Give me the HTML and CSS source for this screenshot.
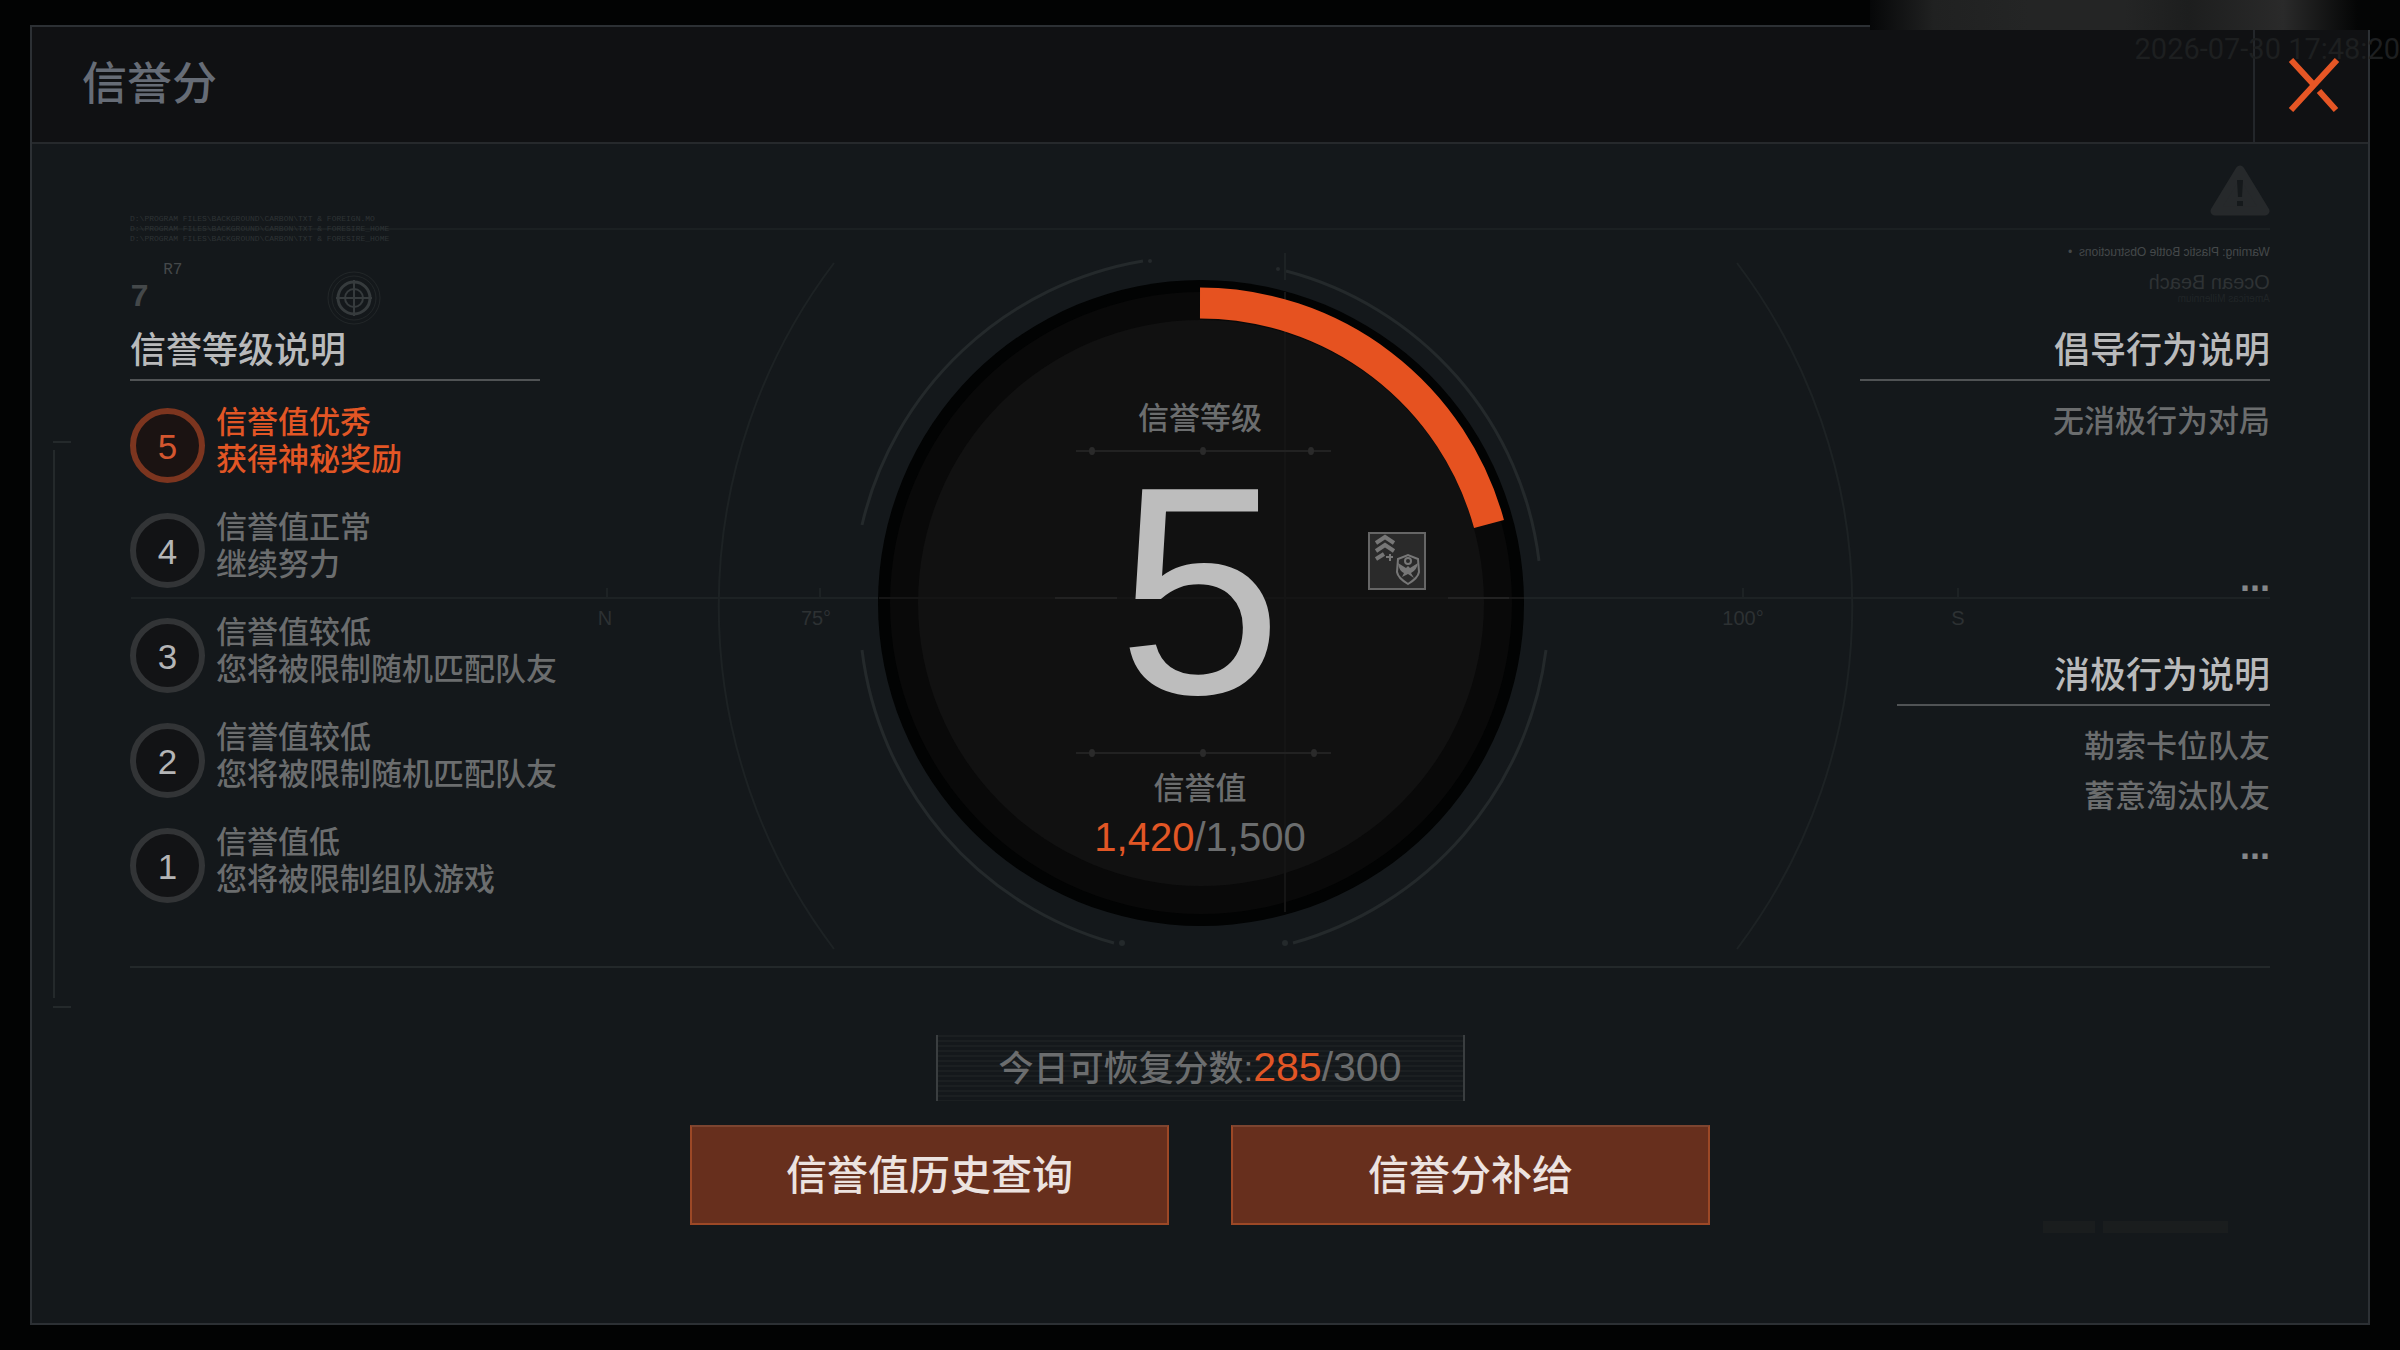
FILE: index.html
```
<!DOCTYPE html>
<html lang="zh-CN">
<head>
    <meta charset="UTF-8">
    <title>信誉分</title>
    <link rel="stylesheet" href="styles.css">
</head>
<body>
    <div class="panel">
        <header class="panel-header">
            <h1>信誉分</h1>
            <button class="close" type="button" aria-label="关闭">
                <svg width="52" height="54" viewBox="0 0 52 54">
                    <path d="M49 2L3 52M3 2L26 27M31 33L48 52"/>
                </svg>
            </button>
        </header>

        <main class="board">
            <!-- compass lines, outer arcs and the score ring -->
            <svg class="hud" viewBox="130 230 2140 736" aria-hidden="true">
                <g class="hud-faint">
                    <path d="M131 598H879M1524 598H2270"/>
                    <path d="M834 263A568 568 0 0 0 834 949M1737 263A568 568 0 0 1 1737 949"/>
                    <path d="M1285 253V280M607 588V598M820 588V598M1743 588V598M1958 588V598"/>
                </g>
                <path class="hud-bracket" d="M54 450V998M53 442H71M53 1007H71"/>
                <path class="hud-arc" d="M862 525A348 348 0 0 1 1143 261M1286 271A342 342 0 0 1 1539 561M862 650A348 348 0 0 0 1114 943M1546 650A350 350 0 0 1 1293 943"/>
                <g class="hud-dot">
                    <circle cx="1150" cy="261" r="2"/>
                    <circle cx="1278" cy="269" r="2"/>
                    <circle cx="1122" cy="943" r="3"/>
                    <circle cx="1285" cy="943" r="3"/>
                </g>
                <g class="hud-text">
                    <text x="605" y="625">N</text>
                    <text x="816" y="625">75°</text>
                    <text x="1743" y="625">100°</text>
                    <text x="1958" y="625">S</text>
                </g>

                <circle cx="1201" cy="603" r="323" fill="#020303"/>
                <circle cx="1201" cy="603" r="311" fill="#090909"/>
                <circle cx="1201" cy="603" r="283" fill="#111111"/>
                <path d="M1285 292V912M879 598H1524" stroke="#151515" stroke-width="2"/>
                <path d="M1055 598H1117M1448 598H1509" stroke="#222222" stroke-width="2"/>
                <path d="M1200 303A300 300 0 0 1 1489 524" fill="none" stroke="#e65220" stroke-width="31"/>

                <path d="M1076 451H1331M1076 753H1331" stroke="#222222" stroke-width="2"/>
                <g fill="#2a2a2a">
                    <ellipse cx="1092" cy="451" rx="3" ry="4"/>
                    <ellipse cx="1203" cy="451" rx="3" ry="4"/>
                    <ellipse cx="1311" cy="451" rx="3" ry="4"/>
                    <ellipse cx="1092" cy="753" rx="3" ry="4"/>
                    <ellipse cx="1203" cy="753" rx="3" ry="4"/>
                    <ellipse cx="1314" cy="753" rx="3" ry="4"/>
                </g>

                <!-- rank badge -->
                <g class="badge" transform="translate(1368 532)">
                    <rect x="1" y="1" width="56" height="56"/>
                    <path class="chevron" d="M8 11L17 5L26 11M8 19L17 13L26 19M8 27L16 22"/>
                    <path d="M18 25H25M22 22V29"/>
                    <path class="shield" d="M30 27L40 23L50 27L51 40Q50 46 40 52Q30 46 29 40Z"/>
                    <circle cx="40" cy="29" r="3"/>
                    <path class="wings" d="M30 31Q31 39 36 41L34 45L40 42L46 46L43 41Q49 38 50 31L42 36L40 34L38 36Z"/>
                </g>
            </svg>

            <section class="levels">
                <pre class="code-lines">D:\PROGRAM FILES\BACKGROUND\CARBON\TXT &amp; FOREIGN.MO
D:\PROGRAM FILES\BACKGROUND\CARBON\TXT &amp; FORESIRE_HOME
D:\PROGRAM FILES\BACKGROUND\CARBON\TXT &amp; FORESIRE_HOME</pre>
                <div class="meta">
                    <span class="meta-num">7</span>
                    <span class="meta-code">R7</span>
                    <svg class="target" width="56" height="56" viewBox="0 0 56 56">
                        <circle cx="28" cy="28" r="26" stroke-width="1" opacity=".4"/>
                        <circle cx="28" cy="28" r="22" stroke-width="1" opacity=".4"/>
                        <circle cx="28" cy="28" r="16" stroke-width="3"/>
                        <circle cx="28" cy="28" r="9" stroke-width="2"/>
                        <path d="M10 28H46M28 10V46" stroke-width="2"/>
                    </svg>
                </div>
                <h2>信誉等级说明</h2>
                <ol class="level-list">
                    <li class="active"><b>5</b><p>信誉值优秀<br>获得神秘奖励</p></li>
                    <li><b>4</b><p>信誉值正常<br>继续努力</p></li>
                    <li><b>3</b><p>信誉值较低<br>您将被限制随机匹配队友</p></li>
                    <li><b>2</b><p>信誉值较低<br>您将被限制随机匹配队友</p></li>
                    <li><b>1</b><p>信誉值低<br>您将被限制组队游戏</p></li>
                </ol>
            </section>

            <section class="score">
                <p class="score-label">信誉等级</p>
                <p class="score-level">5</p>
                <p class="score-label">信誉值</p>
                <p class="score-value"><em>1,420</em>/1,500</p>
            </section>

            <section class="rules">
                <svg class="warning" width="60" height="52" viewBox="0 0 60 52">
                    <path d="M30 5L55 46H5Z" fill="#26292b" stroke="#26292b" stroke-width="9" stroke-linejoin="round"/>
                    <path d="M27 15H33L32 32H28ZM27 36H33V41H27Z" fill="#15191b"/>
                </svg>
                <div class="mirror">
                    <p class="mirror-small">Warning: Plastic Bottle Obstructions &nbsp;•</p>
                    <p class="mirror-big">Ocean Beach</p>
                    <p class="mirror-tiny">Americas Millennium</p>
                </div>
                <h2>倡导行为说明</h2>
                <ul class="good">
                    <li>无消极行为对局</li>
                    <li class="more">...</li>
                </ul>
                <h2 class="short">消极行为说明</h2>
                <ul>
                    <li>勒索卡位队友</li>
                    <li>蓄意淘汰队友</li>
                    <li class="more">...</li>
                </ul>
            </section>
        </main>

        <footer class="panel-footer">
            <p class="recover"><span>今日可恢复分数:</span><em>285</em>/300</p>
            <div class="actions">
                <button type="button">信誉值历史查询</button>
                <button type="button">信誉分补给</button>
            </div>
        </footer>
        <div class="ghost-bars"><i></i><i></i></div>
    </div>
    <div class="top-strip"></div>
    <time class="clock">2026-07-30 17:48:20</time>
</body>
</html>
```

FILE: styles.css
```
* {
    box-sizing: border-box;
}
body {
    margin: 0;
    padding: 25px 30px;
    min-height: 100vh;
    display: flex;
    position: relative;
    overflow: hidden;
    background: #020303;
    color: #6b6d6e;
    font-family: "Liberation Sans", "Noto Sans CJK SC", sans-serif;
    font-weight: 500;
}
h1, h2, p, ul, ol, pre {
    margin: 0;
    padding: 0;
    font-weight: 500;
}
h1, h2, p, li {
    white-space: nowrap;
}
ul, ol {
    list-style: none;
}
em {
    color: #e25625;
    font-style: normal;
}
button {
    font-family: inherit;
    cursor: pointer;
}

.panel {
    flex: 1;
    position: relative;
    display: flex;
    flex-direction: column;
    border: 2px solid #2c3034;
    background: #14181b;
}
.panel-header {
    display: flex;
    justify-content: space-between;
    height: 117px;
    border-bottom: 2px solid #26292c;
    background: #101113;
}
h1 {
    padding-left: 50px;
    color: #666c76;
    font-size: 45px;
    line-height: 116px;
}
.close {
    width: 115px;
    padding: 4px 0 0 4px;
    border: 0;
    border-left: 2px solid #23262a;
    background: none;
}
.close path {
    fill: none;
    stroke: #e65625;
    stroke-width: 6;
}

/* middle board */
.board {
    position: relative;
    display: grid;
    grid-template-columns: 450px 1fr 450px;
    height: 740px;
    margin: 84px 98px 0;
    border-top: 2px solid #1b2022;
    border-bottom: 2px solid #23282a;
}
.hud {
    position: absolute;
    inset: 0;
    width: 100%;
    height: 100%;
    overflow: visible;
}
.hud-faint {
    fill: none;
    stroke: #1d2224;
    stroke-width: 2;
}
.hud-bracket, .hud-arc {
    fill: none;
    stroke: #24292b;
    stroke-width: 2;
}
.hud-arc {
    stroke-width: 3;
}
.hud-dot {
    fill: #24292b;
}
.hud-text {
    fill: #2d3133;
    font-size: 20px;
    text-anchor: middle;
}
.badge rect {
    fill: #2a2a2a;
    stroke: #666666;
    stroke-width: 2;
}
.badge path, .badge circle {
    fill: none;
    stroke: #777777;
    stroke-width: 2;
}
.badge .chevron {
    stroke-width: 4;
}
.badge .wings {
    fill: #777777;
    stroke: none;
}
.levels, .score, .rules {
    position: relative;
}
h2 {
    width: 410px;
    padding-bottom: 5px;
    border-bottom: 2px solid #505355;
    color: #b9babb;
    font-size: 36px;
    line-height: 46px;
}

/* left column */
.code-lines {
    position: absolute;
    top: -16px;
    color: #2e3335;
    font: 8px/10px "Liberation Mono", monospace;
}
.meta {
    position: relative;
    display: flex;
    height: 98px;
    padding-top: 30px;
    color: #44484a;
    font-family: "Liberation Mono", monospace;
}
.meta-num {
    padding-top: 20px;
    font-size: 32px;
    font-weight: 700;
    line-height: 36px;
}
.meta-code {
    margin-left: 14px;
    font-size: 16px;
    line-height: 20px;
}
.target {
    margin: 10px 0 0 144px;
    fill: none;
    stroke: #363b3d;
}
.level-list {
    display: grid;
    gap: 31px;
    margin-top: 23px;
}
.level-list li {
    display: flex;
    gap: 11px;
    height: 74px;
    font-size: 31px;
    line-height: 37px;
}
.level-list b {
    width: 75px;
    height: 75px;
    margin-top: 4px;
    border: 6px solid #323436;
    border-radius: 50%;
    background: #121315;
    color: #b4b5b6;
    font-size: 35px;
    font-weight: 400;
    line-height: 66px;
    text-align: center;
}
.level-list .active {
    color: #e25625;
}
.level-list .active b {
    border-color: #7c351f;
    background: #1b1312;
    color: #d3562f;
}

/* dial text */
.score {
    padding-top: 169px;
    text-align: center;
}
.score-label {
    font-size: 31px;
    line-height: 40px;
}
.score-level {
    margin: 32px 0 58px;
    color: #bdbdbd;
    font-size: 296px;
    line-height: 240px;
}
.score-value {
    margin-top: 4px;
    font-size: 40px;
    line-height: 48px;
}

/* right column */
.rules {
    display: flex;
    flex-direction: column;
    align-items: flex-end;
    text-align: right;
}
.warning {
    position: absolute;
    top: -65px;
    right: 0;
}
.mirror {
    height: 98px;
    padding-top: 14px;
    color: #44484a;
    text-align: left;
    transform: scaleX(-1);
}
.mirror-small {
    font-size: 12px;
    line-height: 16px;
}
.mirror-big {
    margin-top: 10px;
    color: #2e3234;
    font-size: 20px;
    line-height: 24px;
}
.mirror-tiny {
    color: #202527;
    font-size: 10px;
    line-height: 10px;
}
.rules .short {
    width: 373px;
}
.rules ul {
    margin-top: 16px;
    font-size: 31px;
    line-height: 50px;
}
.more {
    color: #85878a;
    font-size: 36px;
    font-weight: 700;
}
.good .more {
    margin: 107px 0 49px;
}

/* bottom */
.panel-footer {
    display: flex;
    flex-direction: column;
    align-items: center;
    gap: 24px;
    padding: 67px 0 98px;
}
.recover {
    position: relative;
    width: 529px;
    border: solid #3a3e40;
    border-width: 0 2px;
    background: repeating-linear-gradient(#1b1f21 0 2px, #14181b 2px 5px);
    font-size: 41px;
    line-height: 65px;
    text-align: center;
}
.recover span {
    font-size: 35px;
}
.actions {
    display: flex;
    gap: 62px;
}
.actions button {
    width: 479px;
    height: 100px;
    padding-bottom: 7px;
    border: 2px solid #9c4826;
    border-top-color: #7c4430;
    background: #672f1d;
    color: #ece3e0;
    font-size: 41px;
    font-weight: 500;
}
.ghost-bars {
    position: absolute;
    right: 140px;
    bottom: 90px;
    display: flex;
    gap: 8px;
}
.ghost-bars i {
    width: 52px;
    height: 12px;
    background: #1a1d1e;
}
.ghost-bars i + i {
    width: 125px;
}

/* laid over the panel */
.top-strip {
    position: absolute;
    top: 0;
    right: 0;
    width: 530px;
    height: 30px;
    background: linear-gradient(90deg, #060708, #202121 12%, #242525 30%, #242525 48%, #1d1e1e 60%, #2a2a2a 78%, #040505 92%);
}
.clock {
    position: absolute;
    top: 32px;
    right: 0;
    color: #1d1f20;
    font: 29px/34px Roboto, sans-serif;
}
```
